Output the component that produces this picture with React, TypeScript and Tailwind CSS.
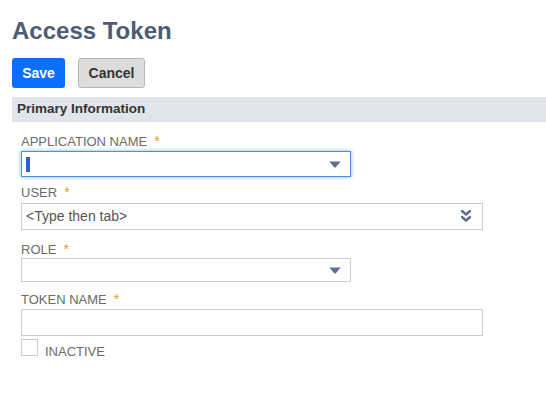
import React from "react";

const font = { fontFamily: '"Liberation Sans", Arial, sans-serif' };

function Label({ text, className = "" }: { text: string; className?: string }) {
  return (
    <div className={`flex items-start h-[16px] leading-[16px] text-[13px] text-[#6b6b6b] ${className}`}>
      <span>{text}</span>
      <span className="ml-[7px] text-[#dba21a] text-[14px] leading-[14px]">*</span>
    </div>
  );
}

function Arrow() {
  return (
    <svg width="12" height="7" viewBox="0 0 12 7" className="shrink-0">
      <path d="M0.3 0.5 L11.7 0.5 L6.8 6.2 Q6 7 5.2 6.2 Z" fill="#5b7091" />
    </svg>
  );
}

function DoubleChevron() {
  return (
    <svg width="10" height="13" viewBox="0 0 10 13" className="shrink-0">
      <path d="M1 1 L5 4.5 L9 1" fill="none" stroke="#5b7091" strokeWidth="2.4" strokeLinejoin="round" strokeLinecap="round" />
      <path d="M1 7 L5 10.5 L9 7" fill="none" stroke="#5b7091" strokeWidth="2.4" strokeLinejoin="round" strokeLinecap="round" />
    </svg>
  );
}

export default function App() {
  return (
    <div className="w-[546px] h-[403px] bg-white px-3 overflow-hidden" style={font}>
      <h1 className="mt-[17px] h-[28px] leading-[28px] text-[24px] font-bold text-[#4d5b74]">Access Token</h1>
      <div className="mt-[13px] flex gap-[13px]">
        <button className="w-[53px] h-[30px] rounded-[3px] bg-[#0b6ffd] text-white text-[14px] font-bold leading-[30px]">
          Save
        </button>
        <button className="w-[67px] h-[30px] rounded-[3px] bg-[#dcdcdc] border border-[#b5b5b5] text-[#333] text-[14px] font-bold leading-[28px]">
          Cancel
        </button>
      </div>
      <div className="mt-[9px] -mr-3 h-[25px] bg-[#e1e5eb] pl-[5px] flex items-center">
        <span className="text-[13.5px] font-bold text-[#333]">Primary Information</span>
      </div>
      <div className="pl-[9px]">
        <Label text="APPLICATION NAME" className="mt-[12px]" />
        <div className="mt-[1px] w-[330px] h-[26px] border border-[#4a90e2] shadow-[0_0_4px_#7fb2f0] flex items-center justify-between pl-[4px] pr-[9px]">
          <div className="w-[4px] h-[15px] bg-[#2e5fd3]" />
          <Arrow />
        </div>

        <Label text="USER" className="mt-[8px]" />
        <div className="mt-[2px] w-[462px] h-[27px] border border-[#cccccc] flex items-center justify-between pl-[4px] pr-[11px]">
          <span className="text-[14px] text-[#555]">&lt;Type then tab&gt;</span>
          <DoubleChevron />
        </div>

        <Label text="ROLE" className="mt-[12px]" />
        <div className="w-[330px] h-[24px] border border-[#cccccc] flex items-center justify-end pr-[9px]">
          <Arrow />
        </div>

        <Label text="TOKEN NAME" className="mt-[10px]" />
        <div className="mt-[1px] w-[462px] h-[27px] border border-[#cccccc]" />

        <div className="mt-[3px] flex items-start">
          <div className="w-[17px] h-[17px] border border-[#cccccc] bg-white" />
          <span className="ml-[7px] mt-[5px] text-[13px] leading-[16px] text-[#6b6b6b]">INACTIVE</span>
        </div>
      </div>
    </div>
  );
}
